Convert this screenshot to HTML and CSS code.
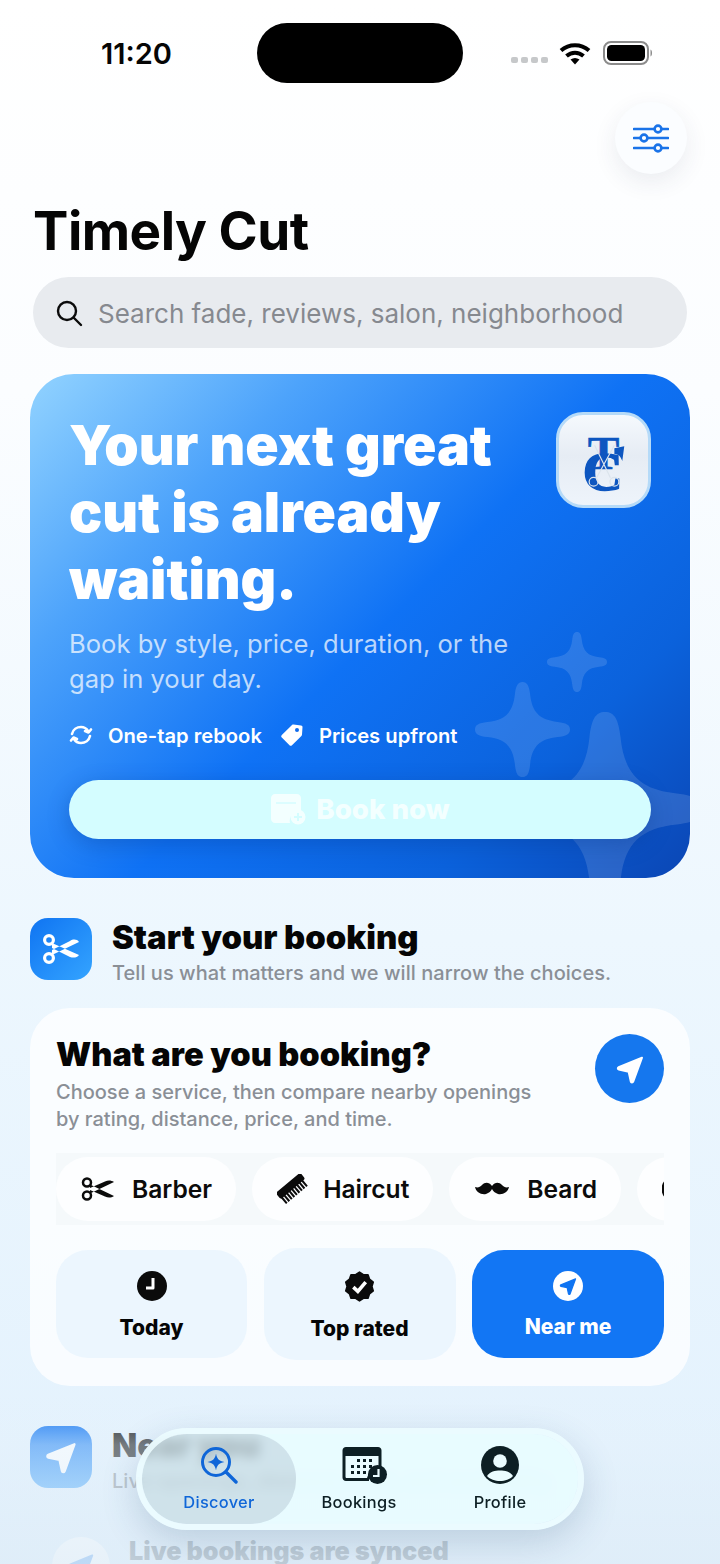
FILE: index.html
```html
<!DOCTYPE html>
<html lang="en">
  <head>
    <meta charset="UTF-8" />
    <meta name="viewport" content="width=device-width, initial-scale=1.0" />
    <title>Timely Cut</title>
    <link rel="stylesheet" href="styles.css">
  </head>
  <body>
    <svg class="defs" width="0" height="0">
      <symbol id="sparkle" viewBox="0 0 100 100">
        <path d="M50 0C55 0 57 4 58 13C60 32 68 40 87 42C96 43 100 45 100 50C100 55 96 57 87 58C68 60 60 68 58 87C57 96 55 100 50 100C45 100 43 96 42 87C40 68 32 60 13 58C4 57 0 55 0 50C0 45 4 43 13 42C32 40 40 32 42 13C43 4 45 0 50 0Z" />
      </symbol>
      <symbol id="arrow" viewBox="0 0 24 24">
        <path d="M21 3.5L3.5 10.6C2.6 11 2.7 12.200 3.600 12.400L11 14L12.600 21.400C12.800 22.300 14 22.400 14.400 21.500Z" stroke-width="1.500" stroke-linejoin="round" />
      </symbol>
    </svg>

    <div class="screen">
      <div class="status">
        <span class="time">11:20</span>
        <div class="island"></div>
        <div class="status-icons">
          <div class="signal"><i></i><i></i><i></i><i></i></div>
          <svg class="wifi" viewBox="0 0 32 24" width="32" height="24">
            <path d="M2 9.500C10 2.500 22 2.500 30 9.500" fill="none" stroke="#000" stroke-width="4" />
            <path d="M7.500 15C12.500 10.500 19.500 10.500 24.500 15" fill="none" stroke="#000" stroke-width="4" />
            <path d="M11.500 18.500C14.500 16.500 17.500 16.500 20.500 18.500L16 23.500Z" fill="#000" />
          </svg>
          <svg class="battery" viewBox="0 0 50 24" width="50" height="24">
            <rect x="1" y="1" width="44" height="22" rx="7" fill="none" stroke="#8b8b8b" stroke-width="2" />
            <rect x="4" y="4" width="38" height="16" rx="4.500" fill="#000" />
            <path d="M47.500 8.500C49.500 9 49.500 15 47.500 15.500Z" fill="#8b8b8b" />
          </svg>
        </div>
      </div>

      <div class="top-actions">
        <div class="filter-btn">
          <svg viewBox="0 0 36 30" width="36" height="30" fill="#fff" stroke="#1a73e8" stroke-width="2.600">
            <path d="M1 6H35M1 15H35M1 25H35" stroke-linecap="round" />
            <circle cx="25" cy="6" r="3.400" />
            <circle cx="11" cy="15" r="3.400" />
            <circle cx="25" cy="25" r="3.400" />
          </svg>
        </div>
      </div>

      <h1 class="app-title">Timely Cut</h1>

      <div class="search">
        <svg viewBox="0 0 28 28" width="28" height="28" fill="none" stroke="#0b0b0b" stroke-width="2.400">
          <circle cx="12" cy="12" r="9" />
          <path d="M18.500 18.500L26 26" stroke-linecap="round" />
        </svg>
        <span>Search fade, reviews, salon, neighborhood</span>
      </div>

      <section class="hero">
        <svg class="star star-sm"><use href="#sparkle" /></svg>
        <svg class="star star-md"><use href="#sparkle" /></svg>
        <svg class="star star-lg"><use href="#sparkle" /></svg>

        <div class="hero-top">
          <h2>Your next great cut is already waiting.</h2>
          <div class="logo">
            <svg viewBox="0 0 90 90" width="89" height="90">
              <text class="logo-c" x="24" y="75">C</text>
              <text class="logo-t" x="29" y="54">T</text>
              <path d="M56 33L66 31L64 46C62 41 60 39 56 39Z" fill="#0d56c0" />
              <g fill="none" stroke="#dbe4ec" stroke-width="1.200">
                <path d="M36 30L52 63M56 30L38 63" />
                <circle cx="35" cy="67" r="4.500" />
                <circle cx="56" cy="67" r="4.500" />
              </g>
            </svg>
          </div>
        </div>

        <p class="hero-sub">Book by style, price, duration, or the gap in your day.</p>

        <div class="perks">
          <div class="perk">
            <svg viewBox="0 0 24 24" width="24" height="24" fill="none" stroke="#fff" stroke-width="2.600" stroke-linecap="round">
              <path d="M3 11C4 6.500 8 4 12 4C15 4 17.500 5.500 19 8" />
              <path d="M21 13C20 17.500 16 20 12 20C9 20 6.500 18.500 5 16" />
              <path d="M22 6.500L19.500 9.500L16 8" stroke-linejoin="round" />
              <path d="M2 17.500L4.500 14.500L8 16" stroke-linejoin="round" />
            </svg>
            <span>One-tap rebook</span>
          </div>
          <div class="perk">
            <svg viewBox="0 0 24 24" width="24" height="24">
              <path d="M13.500 1.500L21 2.500C22 2.700 22.500 3.300 22.500 4.200L22 11.500C22 12 21.800 12.500 21.400 12.900L12 22.300C11.200 23 10.200 23 9.500 22.300L1.800 14.500C1 13.800 1 12.800 1.800 12L12 2C12.400 1.600 12.900 1.500 13.500 1.500Z" fill="#fff" />
              <circle cx="17" cy="7" r="2" fill="#0f6bec" />
            </svg>
            <span>Prices upfront</span>
          </div>
        </div>

        <div class="book-btn">
          <svg viewBox="0 0 36 32" width="36" height="32">
            <path d="M5 1H27C29 1 31 3 31 5V19A9 9 0 0 0 20 30H5C3 30 1 28 1 26V5C1 3 3 1 5 1Z" fill="#f3ffff" />
            <circle cx="28" cy="24" r="7.500" fill="#f3ffff" />
            <path d="M28 20V28M24 24H32" stroke="#d4fdff" stroke-width="2" />
            <path d="M6 10H26" stroke="#d4fdff" stroke-width="1.500" />
          </svg>
          <span>Book now</span>
        </div>
      </section>

      <div class="section-head">
        <div class="section-icon">
          <svg viewBox="0 0 40 32" width="40" height="32">
            <g fill="none" stroke="#fff" stroke-width="3.200">
              <circle cx="8" cy="7" r="4.400" />
              <circle cx="8" cy="25" r="4.400" />
            </g>
            <path d="M11 10L38 22C36 25 32 25 29 24L11 15ZM11 22L38 9C36 6 32 6 29 8L11 17Z" fill="#fff" />
          </svg>
        </div>
        <div>
          <h3>Start your booking</h3>
          <p>Tell us what matters and we will narrow the choices.</p>
        </div>
      </div>

      <section class="card">
        <div class="card-head">
          <div class="card-text">
            <h3>What are you booking?</h3>
            <p>Choose a service, then compare nearby openings by rating, distance, price, and time.</p>
          </div>
          <div class="go-btn">
            <svg width="32" height="32" fill="#fff" stroke="#fff"><use href="#arrow" /></svg>
          </div>
        </div>

        <div class="chips">
          <div class="chip">
            <svg viewBox="0 0 34 24" width="34" height="24">
              <g fill="none" stroke="#0b0b0b" stroke-width="2.500">
                <circle cx="6" cy="5.500" r="4" />
                <circle cx="6" cy="18.500" r="4" />
              </g>
              <path d="M9 7.500L33 19C30 21 27 21 24 19.500L9 13ZM9 16.500L33 5C30 3 27 3 24 4.500L9 11Z" fill="#0b0b0b" />
            </svg>
            <span>Barber</span>
          </div>
          <div class="chip chip-tight">
            <svg viewBox="0 0 32 30" width="32" height="30">
              <g transform="rotate(-40 16 15)" fill="#0b0b0b">
                <rect x="0" y="7" width="32" height="8" rx="2" />
                <path d="M2 14V22M5.300 14V22M8.600 14V22M11.900 14V22M15.200 14V22M18.500 14V22M21.800 14V22M25.100 14V22M28.400 14V22" stroke="#0b0b0b" stroke-width="2" />
              </g>
            </svg>
            <span>Haircut</span>
          </div>
          <div class="chip">
            <svg viewBox="0 0 36 16" width="36" height="16">
              <path d="M18 5C15 1 11 1 8 4C6 6 4 7 1 6C2 11 7 14 12 13C15 12 17 10 18 8C19 10 21 12 24 13C29 14 34 11 35 6C32 7 30 6 28 4C25 1 21 1 18 5Z" fill="#0b0b0b" />
            </svg>
            <span>Beard</span>
          </div>
          <div class="chip">
            <svg viewBox="0 0 24 24" width="24" height="24">
              <circle cx="12" cy="12" r="11" fill="none" stroke="#0b0b0b" stroke-width="3" />
            </svg>
            <span>Color</span>
          </div>
        </div>

        <div class="quick">
          <div class="tile">
            <svg viewBox="0 0 32 32" width="32" height="32">
              <circle cx="16" cy="16" r="15" fill="#0b0b0b" />
              <path d="M17 8V18H10" fill="none" stroke="#fff" stroke-width="3" stroke-linejoin="round" />
            </svg>
            <span>Today</span>
          </div>
          <div class="tile tile-tall">
            <svg viewBox="0 0 24 24" width="33" height="33">
              <path d="M12 1.500L14.780 3.440L18.170 3.500L19.280 6.710L21.990 8.760L21 12L21.990 15.240L19.280 17.290L18.170 20.500L14.780 20.560L12 22.500L9.220 20.560L5.830 20.500L4.720 17.290L2.010 15.240L3 12L2.010 8.760L4.720 6.710L5.830 3.500L9.220 3.440Z" fill="#0b0b0b" stroke="#0b0b0b" stroke-width="1.200" stroke-linejoin="round" />
              <path d="M7.500 12.500L10.800 15.500L16.500 8.800" fill="none" stroke="#fff" stroke-width="2.600" />
            </svg>
            <span>Top rated</span>
          </div>
          <div class="tile tile-on">
            <div class="tile-dot">
              <svg width="20" height="20" fill="#0f74f2" stroke="#0f74f2"><use href="#arrow" /></svg>
            </div>
            <span>Near me</span>
          </div>
        </div>
      </section>

      <div class="section-head section-next">
        <div class="section-icon">
          <svg width="36" height="36" fill="#fff" stroke="#fff"><use href="#arrow" /></svg>
        </div>
        <div>
          <h3>Near you</h3>
          <p>Live openings, distance, trust, and availability</p>
        </div>
      </div>

      <div class="sync-row">
        <div class="sync-icon">
          <svg width="30" height="30" fill="#6aa9f2" stroke="#6aa9f2"><use href="#arrow" /></svg>
        </div>
        <span>Live bookings are synced</span>
      </div>

      <div class="fade"></div>

      <nav class="tabbar">
        <div class="tab tab-on">
          <svg viewBox="0 0 38 38" width="38" height="38" fill="none" stroke="#0f66d8" stroke-width="3">
            <circle cx="16" cy="16" r="13.500" />
            <path d="M26 26L36 36" stroke-linecap="round" stroke-width="3.400" />
            <path d="M16 7.500C17 13 19 15 24.500 16C19 17 17 19 16 24.500C15 19 13 17 7.500 16C13 15 15 13 16 7.500Z" fill="#0f66d8" stroke="none" />
          </svg>
          <span>Discover</span>
        </div>
        <div class="tab">
          <svg class="tab-cal" viewBox="0 0 46 38" width="46" height="38">
            <path d="M4 1H36C38 1 39.500 2.500 39.500 4.500V24A11 11 0 0 0 27 35H4C2 35 .5 33.500 .5 31.500V4.500C.5 2.500 2 1 4 1Z" fill="#0d1f24" />
            <path d="M3.500 10H36.500V22A12 12 0 0 0 25 32H5C4 32 3.500 31.500 3.500 30.500Z" fill="#eafcff" />
            <g fill="#0d1f24">
              <rect x="15" y="13" width="3" height="3" /><rect x="21" y="13" width="3" height="3" /><rect x="27" y="13" width="3" height="3" />
              <rect x="9" y="19" width="3" height="3" /><rect x="15" y="19" width="3" height="3" /><rect x="21" y="19" width="3" height="3" /><rect x="27" y="19" width="3" height="3" />
              <rect x="9" y="25" width="3" height="3" /><rect x="15" y="25" width="3" height="3" /><rect x="21" y="25" width="3" height="3" />
              <circle cx="35.500" cy="28.500" r="9.500" />
            </g>
            <path d="M36.500 23V30H31" fill="none" stroke="#eafcff" stroke-width="2.200" />
          </svg>
          <span>Bookings</span>
        </div>
        <div class="tab">
          <svg viewBox="0 0 38 38" width="38" height="38">
            <circle cx="19" cy="19" r="19" fill="#0d1f24" />
            <circle cx="19" cy="15" r="6.800" fill="#eafcff" />
            <path d="M6 30C9 25.500 14 24.500 19 24.500C24 24.500 29 25.500 32 30C29 33.500 24 35 19 35C14 35 9 33.500 6 30Z" fill="#eafcff" />
          </svg>
          <span>Profile</span>
        </div>
      </nav>
    </div>
  </body>
</html>
```

FILE: styles.css
```css
* {
  box-sizing: border-box;
}

html,
body {
  margin: 0;
  padding: 0;
}

body {
  font-family: Inter, "Liberation Sans", sans-serif;
  color: #050505;
}

h1,
h2,
h3,
p {
  margin: 0;
}

svg {
  display: block;
  flex: none;
}

.defs {
  position: absolute;
}

.screen {
  position: relative;
  width: 720px;
  height: 1564px;
  overflow: hidden;
  padding: 0 30px;
  background: linear-gradient(180deg, #ffffff 0%, #fbfdff 25%, #edf7fe 60%, #e2f1fd 100%);
}

/* status bar */
.status {
  display: flex;
  align-items: center;
  padding: 23px 0 0 71px;
}

.time {
  width: 156px;
  font-size: 29px;
  font-weight: 600;
}

.island {
  width: 206px;
  height: 60px;
  border-radius: 30px;
  background: #000;
}

.status-icons {
  display: flex;
  align-items: center;
  margin-left: 48px;
}

.signal {
  display: flex;
  gap: 3px;
  width: 48px;
  padding-top: 14px;
}

.signal i {
  width: 7px;
  height: 6px;
  border-radius: 2px;
  background: #c6c8ca;
}

.battery {
  margin-left: 12px;
}

/* header */
.top-actions {
  display: flex;
  justify-content: flex-end;
  margin-top: 19px;
  padding-right: 3px;
}

.filter-btn {
  display: flex;
  align-items: center;
  justify-content: center;
  width: 72px;
  height: 72px;
  border-radius: 50%;
  background: #fbfdff;
  box-shadow: 0 8px 24px rgba(40, 60, 90, 0.09);
}

.app-title {
  margin: 31px 0 0 3px;
  font-size: 53px;
  line-height: 53px;
  font-weight: 700;
  letter-spacing: -0.5px;
}

.search {
  display: flex;
  align-items: center;
  gap: 15px;
  height: 71px;
  margin: 19px 3px 0;
  padding-left: 22px;
  border-radius: 36px;
  background: #e8ebef;
  font-size: 26px;
  color: #86898f;
}

.search span {
  padding-top: 2px;
}

/* hero */
.hero {
  position: relative;
  overflow: hidden;
  height: 504px;
  margin-top: 26px;
  padding: 38px 39px 40px;
  border-radius: 44px;
  background: linear-gradient(135deg, #92d3ff 0%, #4da3fb 24%, #0f72f5 52%, #0b62dc 78%, #0b46b4 100%);
  box-shadow: 0 0 0 1px rgba(255, 255, 255, 0.3);
  color: #fff;
}

.star {
  position: absolute;
  fill: rgba(255, 255, 255, 0.13);
}

.star-sm {
  left: 516px;
  top: 258px;
  width: 62px;
  height: 60px;
}

.star-md {
  left: 445px;
  top: 308px;
  width: 95px;
  height: 95px;
}

.star-lg {
  left: 478px;
  top: 338px;
  width: 194px;
  height: 194px;
}

.hero-top {
  position: relative;
  display: flex;
  justify-content: space-between;
  gap: 40px;
}

.hero-top h2 {
  font-size: 55.2px;
  line-height: 67px;
  font-weight: 900;
}

.logo {
  display: flex;
  align-items: center;
  justify-content: center;
  width: 95px;
  height: 96px;
  flex: none;
  border: 3px solid #b5daf8;
  border-radius: 27px;
  background: linear-gradient(180deg, #f5f9fd 0%, #e6ecf4 45%, #eef4fb 100%);
}

.logo-t,
.logo-c {
  font-family: "Liberation Serif", serif;
  font-weight: 700;
  fill: #0d56c0;
  stroke: #0d56c0;
}

.logo-t {
  font-size: 48px;
  stroke-width: 0.5px;
}

.logo-c {
  font-size: 56px;
  stroke-width: 1.6px;
}

.hero-sub {
  position: relative;
  width: 460px;
  margin-top: 13px;
  font-size: 25.6px;
  line-height: 35px;
  color: rgba(255, 255, 255, 0.72);
}

.perks {
  position: relative;
  display: flex;
  gap: 18px;
  margin-top: 27px;
  font-size: 20.2px;
  font-weight: 600;
}

.perk {
  display: flex;
  align-items: center;
  gap: 15px;
  height: 24px;
}

.book-btn {
  position: relative;
  display: flex;
  align-items: center;
  justify-content: center;
  gap: 10px;
  height: 59px;
  margin-top: 33px;
  padding-bottom: 2px;
  border-radius: 30px;
  background: #d4fdff;
  box-shadow: 0 6px 22px rgba(10, 50, 130, 0.3);
  font-size: 27.7px;
  font-weight: 800;
  color: #f3ffff;
}

/* section headers */
.section-head {
  display: flex;
  gap: 20px;
  height: 62px;
  margin-top: 40px;
}

.section-head h3 {
  font-size: 32.8px;
  line-height: 38px;
  font-weight: 900;
}

.section-head p {
  margin-top: 2px;
  font-size: 20px;
  line-height: 30px;
  font-weight: 500;
  letter-spacing: 0.04px;
  color: #8a8f96;
  white-space: nowrap;
}

.section-icon {
  display: flex;
  align-items: center;
  justify-content: center;
  width: 62px;
  height: 62px;
  flex: none;
  border-radius: 18px;
  background: linear-gradient(135deg, #0f74f2, #34a4ff);
}

/* booking card */
.card {
  margin-top: 28px;
  padding: 26px;
  border-radius: 40px;
  background: rgba(255, 255, 255, 0.76);
}

.card-head {
  display: flex;
  justify-content: space-between;
}

.card-text {
  width: 490px;
}

.card-text h3 {
  font-size: 32.6px;
  line-height: 40px;
  font-weight: 900;
}

.card-text p {
  margin-top: 5px;
  font-size: 20px;
  line-height: 27px;
  font-weight: 500;
  color: #8a8f96;
}

.go-btn {
  display: flex;
  align-items: center;
  justify-content: center;
  width: 69px;
  height: 69px;
  border-radius: 50%;
  background: #1577ee;
}

.chips {
  display: flex;
  gap: 16px;
  overflow: hidden;
  height: 72px;
  margin-top: 20px;
  padding-top: 4px;
  background: rgba(240, 245, 248, 0.5);
}

.chip {
  display: flex;
  align-items: center;
  gap: 17px;
  height: 64px;
  flex: none;
  padding: 0 24px 0 25px;
  border-radius: 32px;
  background: #fdfeff;
  font-size: 24.6px;
  font-weight: 600;
  color: #0b0b0b;
}

.chip-tight {
  gap: 14px;
}

.quick {
  display: grid;
  grid-template-columns: 191px 192px 192px;
  justify-content: space-between;
  align-items: center;
  margin-top: 23px;
}

.tile {
  display: flex;
  flex-direction: column;
  align-items: center;
  justify-content: center;
  gap: 13px;
  height: 108px;
  padding-top: 2px;
  border-radius: 32px;
  background: #ecf6fe;
  font-size: 21px;
  font-weight: 800;
}

.tile-tall {
  height: 112px;
}

.tile-on {
  background: #1276f4;
  color: #fff;
}

.tile-dot {
  display: flex;
  align-items: center;
  justify-content: center;
  width: 30px;
  height: 30px;
  border-radius: 50%;
  background: #fff;
}

/* rows under the tab bar */
.section-next .section-icon {
  background: linear-gradient(180deg, #0f74f2, #4aa8fb);
}

.sync-row {
  display: flex;
  gap: 19px;
  margin-top: 49px;
  padding-left: 22px;
  font-size: 25.2px;
  line-height: 28px;
  font-weight: 900;
  color: #6f7d88;
}

.sync-icon {
  display: flex;
  justify-content: center;
  width: 58px;
  height: 58px;
  padding-top: 14px;
  border-radius: 50%;
  background: #ffffff;
}

.fade {
  position: absolute;
  left: 0;
  right: 0;
  bottom: 0;
  height: 170px;
  background: linear-gradient(180deg, rgba(228, 241, 251, 0) 0%, rgba(228, 241, 251, 0.5) 30%, rgba(222, 236, 247, 0.72) 100%);
}

/* tab bar, the pill's spread shadow fills the bar round it */
.tabbar {
  position: absolute;
  left: 136px;
  top: 1428px;
  display: grid;
  grid-template-columns: 154px 126px 156px;
  width: 448px;
  height: 102px;
  overflow: hidden;
  border: 6px solid rgba(235, 252, 255, 0.92);
  border-radius: 51px;
  -webkit-backdrop-filter: blur(6px);
  backdrop-filter: blur(6px);
  box-shadow: 0 12px 36px rgba(40, 80, 120, 0.2);
}

.tab {
  display: flex;
  flex-direction: column;
  align-items: center;
  justify-content: center;
  gap: 8px;
  font-size: 16.4px;
  font-weight: 500;
  letter-spacing: 0.3px;
  color: #0d1f24;
}

.tab-cal {
  margin-left: 11px;
}

.tab-on {
  border-radius: 45px;
  background: rgba(196, 218, 224, 0.62);
  box-shadow: 0 0 0 320px rgba(232, 252, 255, 0.94);
  color: #0f66d8;
}
```
